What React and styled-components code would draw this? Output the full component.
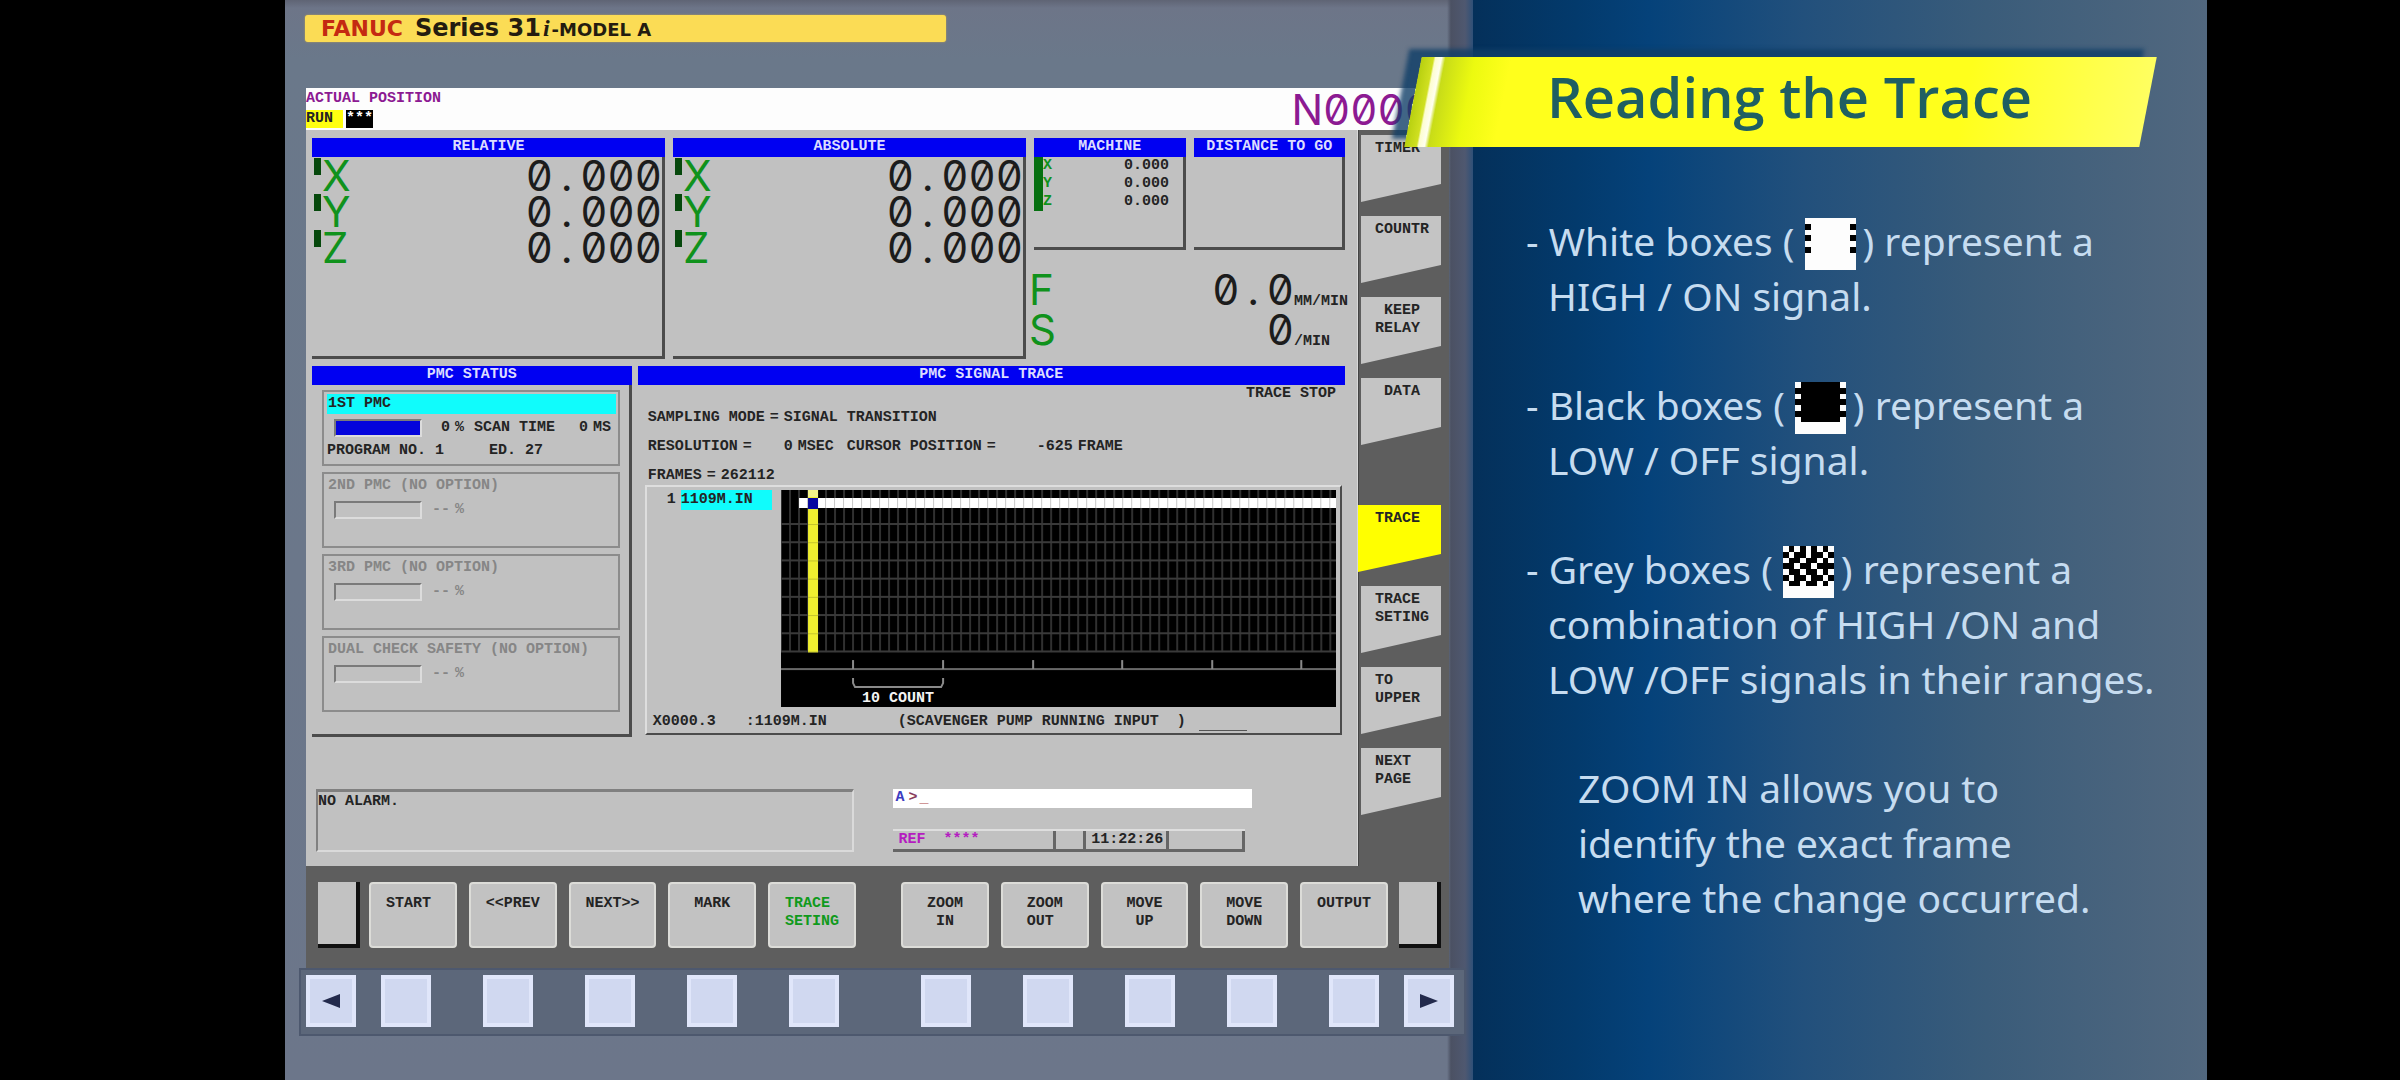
import { Fragment } from "react"
import styled, { createGlobalStyle } from 'styled-components'

const positions = ['X', 'Y', 'Z']

const pmcList = [
    { title: '1ST PMC', active: true, load: ' 0' },
    { title: '2ND PMC (NO OPTION)', load: '--' },
    { title: '3RD PMC (NO OPTION)', load: '--' },
    { title: 'DUAL CHECK SAFETY (NO OPTION)', load: '--' }
]

const sideTabs = [
    { label: 'TIMER' },
    { label: 'COUNTR' },
    { label: ' KEEP\nRELAY' },
    { label: ' DATA' },
    { label: 'TRACE', active: true },
    { label: 'TRACE\nSETING' },
    { label: 'TO\nUPPER' },
    { label: 'NEXT\nPAGE' }
]

const leftKeys = ['START', '<<PREV', 'NEXT>>', ' MARK', 'TRACE\nSETING']
const rightKeys = [' ZOOM\n  IN', ' ZOOM\n OUT', ' MOVE\n  UP', ' MOVE\n DOWN', 'OUTPUT']

// one string per row, # is a white cell
const patterns = {
    white: [
        '#########',
        ' ####### ',
        '#########',
        ' ####### ',
        '#########',
        ' ####### ',
        '#########',
        '#########',
        '#########'
    ],
    black: [
        '#       #',
        '         ',
        '#       #',
        '         ',
        '#       #',
        '         ',
        '#       #',
        '#########',
        '#########'
    ],
    grey: [
        '# # # # #',
        ' #  #  # ',
        '#  #  # #',
        '  #  #   ',
        '#  #  # #',
        ' #  #  # ',
        '#  #  # #',
        '#########',
        '#########'
    ]
}

const SignalBox = ({ kind }) => (
    <BoxIcon viewBox="0 0 9 9" preserveAspectRatio="none" shapeRendering="crispEdges" role="img" aria-label={kind + ' box'}>
        <rect width="9" height="9" fill="#000" />
        {patterns[kind].map((row, y) => row.split('').map((cell, x) => (
            cell === '#' && <rect key={x + '-' + y} x={x} y={y} width="1" height="1" fill="#fdfdfd" />
        )))}
    </BoxIcon>
)

const AxisPanel = ({ title }) => (
    <Panel>
        <PanelTitle>{title}</PanelTitle>
        {positions.map((axis) => (
            <AxisRow key={axis}>
                <Marker />
                <Big $color="#10921c">{axis}</Big>
                <AxisValue>0<Point>.</Point>000</AxisValue>
            </AxisRow>
        ))}
    </Panel>
)

const PmcStatus = () => (
    <StatusPanel>
        <PanelTitle>PMC STATUS</PanelTitle>
        <PmcStack>
            {pmcList.map((pmc) => (
                <PmcBox key={pmc.title} $off={!pmc.active}>
                    <PmcName $active={pmc.active}>{pmc.title}</PmcName>
                    <PmcLine>
                        <Meter $on={pmc.active} />
                        <PmcLoad><span>{pmc.load}</span><span>%</span></PmcLoad>
                        {pmc.active && (
                            <Fragment>
                                <span>SCAN TIME</span>
                                <ScanValue><span>0</span><span>MS</span></ScanValue>
                            </Fragment>
                        )}
                    </PmcLine>
                    {pmc.active && <Line>PROGRAM NO. 1     ED. 27</Line>}
                </PmcBox>
            ))}
        </PmcStack>
    </StatusPanel>
)

const TraceChart = () => {
    const columns = Array.from({ length: 62 }, (_, i) => i * 9)
    const rows = Array.from({ length: 8 }, (_, i) => 34 + i * 18.2)
    const ticks = [72, 162, 252, 341, 431, 520]

    return (
        <Chart viewBox="0 0 555 217" role="img" aria-label="Signal trace">
            <rect width="555" height="217" fill="#000" />
            {columns.map((x) => <rect key={x} x={x - 1} y="0" width="2" height="162" fill="#303030" />)}
            {rows.map((y) => <rect key={y} x="0" y={y - 1} width="555" height="2" fill="#3a3a3a" />)}
            <rect x="18" y="8" width="537" height="10" fill="#fff" />
            {columns.slice(3).map((x) => <rect key={x} x={x - 1} y="8" width="1" height="10" fill="#c8c8c8" />)}
            <rect x="27" y="-1" width="10" height="163" fill="#eeee30" />
            <rect x="27" y="0" width="10" height="7" fill="#f2f28a" />
            {rows.map((y) => <rect key={y} x="27" y={y} width="10" height="1" fill="#c4c42c" />)}
            <rect x="27" y="8" width="10" height="11" fill="#0808a0" />
            <rect x="0" y="178" width="555" height="2" fill="#686868" />
            {ticks.map((x) => <rect key={x} x={x - 1} y="170" width="2" height="9" fill="#8a8a8a" />)}
            <path d="M72 188v5l2 4h86l2-4v-5" fill="none" stroke="#8a8a8a" strokeWidth="2" />
            <text x="81" y="212" fill="#f4f4f4" fontSize="15" fontWeight="700" fontFamily='"Liberation Mono", monospace'>10 COUNT</text>
        </Chart>
    )
}

const SignalTrace = () => (
    <div>
        <PanelTitle>PMC SIGNAL TRACE</PanelTitle>
        <TraceState>TRACE STOP</TraceState>
        <Info>
            <InfoLine><span>SAMPLING MODE</span><span>=</span><span>SIGNAL TRANSITION</span></InfoLine>
            <InfoLine>
                <span>RESOLUTION</span><span>=</span><span>{'   0'}</span><span>MSEC</span>
                <span>CURSOR POSITION</span><span>=</span><span>{'    -625'}</span><span>FRAME</span>
            </InfoLine>
            <InfoLine><span>FRAMES</span><span>=</span><span>262112</span></InfoLine>
        </Info>
        <TraceBox>
            <TraceBody>
                <Signals>
                    <span>1</span>
                    <SignalName>1109M.IN</SignalName>
                </Signals>
                <TraceChart />
            </TraceBody>
            <TraceFoot>
                <Address>X0000.3</Address>
                <SymbolName>:1109M.IN</SymbolName>
                <span>{'(SCAVENGER PUMP RUNNING INPUT  )'}</span>
                <Rule />
            </TraceFoot>
        </TraceBox>
    </div>
)

const Screen = () => (
    <ScreenFrame>
        <ScreenHead>
            <div>
                <Purple>ACTUAL POSITION</Purple>
                <RunLine><Run>RUN</Run><Stars>***</Stars></RunLine>
            </div>
            <Big $color="#8c1a92">N0000</Big>
        </ScreenHead>
        <ScreenBody>
            <Main>
                <PositionGrid>
                    <AxisPanel title="RELATIVE" />
                    <AxisPanel title="ABSOLUTE" />
                    <Rates>
                        <SmallPanels>
                            <Panel>
                                <PanelTitle>MACHINE</PanelTitle>
                                <MachineList>
                                    {positions.map((axis) => (
                                        <MachineRow key={axis}><b>{axis}</b><span>0.000</span></MachineRow>
                                    ))}
                                </MachineList>
                            </Panel>
                            <Panel>
                                <PanelTitle>DISTANCE TO GO</PanelTitle>
                            </Panel>
                        </SmallPanels>
                        <RateRow>
                            <Big $color="#10921c">F</Big>
                            <Big>0<Point>.</Point>0</Big>
                            <Unit>MM/MIN</Unit>
                        </RateRow>
                        <RateRow>
                            <Big $color="#10921c">S</Big>
                            <Big>0</Big>
                            <Unit>/MIN</Unit>
                        </RateRow>
                    </Rates>
                </PositionGrid>
                <PmcGrid>
                    <PmcStatus />
                    <SignalTrace />
                </PmcGrid>
                <Footer>
                    <Alarm>NO ALARM.</Alarm>
                    <div>
                        <Command>
                            <Prompt $color="#3c3cc0">A</Prompt>
                            <Prompt $color="#8a3c5c">&gt;</Prompt>
                            <CommandInput aria-label="Command" defaultValue="_" />
                        </Command>
                        <StateBar>
                            <StateCell><Mode>REF  ****</Mode></StateCell>
                            <StateCell />
                            <StateCell>11:22:26</StateCell>
                            <StateCell />
                        </StateBar>
                    </div>
                </Footer>
            </Main>
            <Tabs>
                {sideTabs.map((tab) => (
                    <Tab key={tab.label} $active={tab.active}>{tab.label}</Tab>
                ))}
            </Tabs>
        </ScreenBody>
        <SoftKeys>
            <EdgeKey aria-label="Previous menu" />
            <KeyGroup>
                {leftKeys.map((label) => (
                    <SoftKey key={label} $green={label.startsWith('TRACE')}><span>{label}</span></SoftKey>
                ))}
            </KeyGroup>
            <KeySpace />
            <KeyGroup>
                {rightKeys.map((label) => <SoftKey key={label}><span>{label}</span></SoftKey>)}
            </KeyGroup>
            <EdgeKey aria-label="Next menu" />
        </SoftKeys>
    </ScreenFrame>
)

const HardwareKeys = () => (
    <KeyPad>
        <HardKey aria-label="Left">
            <svg width="18" height="14" viewBox="0 0 18 14"><path d="M0 7L18 0v14z" fill="#232a4c" /></svg>
        </HardKey>
        <HardGroup>
            {leftKeys.map((label) => <HardKey key={label} aria-label={label.trim()} />)}
        </HardGroup>
        <KeyPadSpace />
        <HardGroup>
            {rightKeys.map((label) => <HardKey key={label} aria-label={label.trim()} />)}
        </HardGroup>
        <HardKey aria-label="Right">
            <svg width="18" height="14" viewBox="0 0 18 14"><path d="M18 7L0 0v14z" fill="#232a4c" /></svg>
        </HardKey>
    </KeyPad>
)

const App = () => {
    return (
        <Page>
            <Global />
            <Machine>
                <Brand>
                    <Fanuc>FANUC</Fanuc>
                    <Series>Series 31</Series>
                    <Italic>i</Italic>
                    <Model>-MODEL A</Model>
                </Brand>
                <Screen />
                <HardwareKeys />
            </Machine>
            <Lesson>
                <Banner><Title>Reading the Trace</Title></Banner>
                <Notes>
                    <Note>- White boxes (<SignalBox kind="white" />) represent a<br />HIGH / ON signal.</Note>
                    <Note>- Black boxes (<SignalBox kind="black" />) represent a<br />LOW / OFF signal.</Note>
                    <Note>- Grey boxes (<SignalBox kind="grey" />) represent a<br />combination of HIGH /ON and<br />LOW /OFF signals in their ranges.</Note>
                    <Tip>ZOOM IN allows you to<br />identify the exact frame<br />where the change occurred.</Tip>
                </Notes>
            </Lesson>
        </Page>
    )
}

const Global = createGlobalStyle`
    * {
        box-sizing: border-box;
    }

    body {
        margin: 0;
        background: #000;
    }

    button, input {
        font: inherit;
        color: inherit;
        border: 0;
        padding: 0;
        margin: 0;
    }
`

const Page = styled.div`
    display: grid;
    grid-template-columns: minmax(0, 1188fr) minmax(0, 734fr);
    min-height: 100vh;
    padding: 0 193px 0 285px;
    overflow: hidden;
`

const Machine = styled.div`
    padding: 15px 9px 0 14px;
    background: linear-gradient(90deg, transparent calc(100% - 26px), #4b5163 calc(100% - 22px), #4f5870 calc(100% - 8px), #2f5078), linear-gradient(#5f6474, #6d7588 8px, #6a788a 60px, #6c768a);
    font: bold 15px/18px "Liberation Mono", monospace;
    color: #242424;
`

const Brand = styled.div`
    display: flex;
    align-items: baseline;
    width: 55%;
    height: 27px;
    margin-left: 6px;
    padding-left: 16px;
    border-radius: 3px;
    background: #fbdc55;
    box-shadow: 0 0 2px #c9a94a;
    color: #241c10;
    font: bold 24px/27px "DejaVu Sans", sans-serif;
`

const Fanuc = styled.span`
    margin-right: 12px;
    font-size: 22px;
    color: #c42a12;
`

const Series = styled.span``

const Italic = styled.i`
    margin: 0 2px;
    font: italic bold 24px/27px "Liberation Serif", serif;
`

const Model = styled.span`
    font-size: 18px;
`

const ScreenFrame = styled.div`
    margin: 46px 15px 0 7px;
    background: #5e5e5e;
`

const ScreenHead = styled.div`
    display: flex;
    justify-content: space-between;
    height: 42px;
    padding: 2px 17px 0 0;
    background: #fdfdfd;
`

const Line = styled.div`
    white-space: pre;
`

const Purple = styled(Line)`
    color: #8c1a92;
`

const RunLine = styled.div`
    display: flex;
    gap: 3px;
    margin-top: 2px;
`

const Run = styled.span`
    width: 37px;
    background: #ffff10;
`

const Stars = styled.span`
    background: #000;
    color: #fff;
`

const Big = styled.span`
    font: 400 42px/40px Inter, sans-serif;
    font-feature-settings: "zero", "tnum";
    color: ${props => props.$color || '#1c1c1c'};
`

const Point = styled.span`
    padding: 0 8px;
`

const ScreenBody = styled.div`
    display: grid;
    grid-template-columns: 1fr 91px;
`

const Main = styled.div`
    padding: 8px 12px 14px 6px;
    background: #c1c1c1;
    border-right: 1px solid #d8d8d8;
`

const PositionGrid = styled.div`
    display: grid;
    grid-template-columns: 353fr 353fr 311fr;
    gap: 8px;
`

const PanelTitle = styled.h2`
    margin: 0;
    height: 19px;
    font: inherit;
    text-align: center;
    white-space: nowrap;
    background: #0000f2;
    color: #dcdcff;
`

const Panel = styled.section`
    border-right: 3px solid #4c4c4c;
    border-bottom: 3px solid #4c4c4c;

    ${PanelTitle} {
        margin-right: -3px;
    }
`

const AxisRow = styled.div`
    display: flex;
    align-items: flex-start;
    height: 36px;
    padding: 1px 0 0 2px;

    ${Big} {
        line-height: 36px;
    }
`

const AxisValue = styled(Big)`
    flex: 1;
    text-align: right;
`

const Marker = styled.i`
    width: 7px;
    height: 17px;
    margin-right: 1px;
    background: #06480c;
`

const Rates = styled.div`
    display: flex;
    flex-direction: column;
    height: 221px;
`

const SmallPanels = styled.div`
    display: grid;
    grid-template-columns: 1fr 1fr;
    gap: 8px;
    height: 112px;
    margin-bottom: 20px;
`

const MachineList = styled.div`
    width: fit-content;
    min-width: 135px;
    border-left: 9px solid #067010;
`

const MachineRow = styled.div`
    display: flex;
    justify-content: space-between;

    b {
        color: #10921c;
    }
`

const RateRow = styled.div`
    display: flex;
    align-items: baseline;
    height: 40px;
    margin: 0 -3px 0 -5px;

    ${Big}:nth-child(2) {
        margin-left: auto;
    }
`

const Unit = styled.span`
    width: 54px;
`

const PmcGrid = styled.div`
    display: grid;
    grid-template-columns: 320fr 708fr;
    gap: 6px;
    margin-top: 7px;
`

const StatusPanel = styled(Panel)`
    height: 371px;
`

const PmcStack = styled.div`
    display: flex;
    flex-direction: column;
    gap: 6px;
    padding: 5px 9px 0 10px;
`

const PmcBox = styled.div`
    height: 76px;
    padding: 2px 2px 0 3px;
    border: 2px solid #8c8c8c;
    color: ${props => props.$off ? '#868686' : '#242424'};
`

const PmcName = styled.div`
    height: 20px;
    padding: 1px;
    background: ${props => props.$active ? '#10fcfc' : 'transparent'};
    white-space: nowrap;
`

const PmcLine = styled.div`
    display: flex;
    gap: 10px;
    margin: 5px 0;
    padding-left: 7px;
`

const PmcLoad = styled.span`
    display: flex;
    gap: 5px;
    white-space: pre;
`

const ScanValue = styled.span`
    display: flex;
    gap: 5px;
    margin-left: 14px;
`

const Meter = styled.span`
    width: 88px;
    height: 18px;
    border: 2px solid;
    border-color: #7a7a7a #dcdcdc #dcdcdc #7a7a7a;
    background: ${props => props.$on ? '#0404dc' : 'transparent'};
`

const TraceState = styled.div`
    padding-right: 9px;
    text-align: right;
`

const Info = styled.div`
    display: flex;
    flex-direction: column;
    gap: 11px;
    padding: 6px 0 0 10px;
`

const InfoLine = styled.div`
    display: flex;
    gap: 5px;
    white-space: pre;

    span:nth-child(5) {
        margin-left: 8px;
    }
`

const TraceBox = styled.div`
    margin: 0 3px 0 7px;
    border: 2px solid;
    border-color: #dedede #4c4c4c #4c4c4c #dedede;
`

const TraceBody = styled.div`
    display: flex;
    align-items: flex-start;
    padding: 3px 4px 0 0;
`

const Signals = styled.div`
    display: flex;
    width: 134px;
    padding-left: 20px;
    gap: 5px;
    line-height: 20px;
`

const SignalName = styled.span`
    width: 91px;
    background: #10fcfc;
`

const Chart = styled.svg`
    flex: 1;
    min-width: 0;
`

const TraceFoot = styled.div`
    display: flex;
    margin-top: 6px;
    padding: 0 0 2px 6px;
    white-space: pre;
`

const Address = styled.span`
    width: 93px;
`

const SymbolName = styled.span`
    width: 152px;
`

const Rule = styled.span`
    width: 48px;
    margin-left: 13px;
    border-bottom: 1px solid #555;
`

const Footer = styled.div`
    display: grid;
    grid-template-columns: 539fr 359fr 54fr;
    column-gap: 39px;
    margin: 52px 0 0 4px;
`

const Alarm = styled.div`
    height: 63px;
    padding-top: 1px;
    border: 2px solid;
    border-top-width: 3px;
    border-color: #808080 #dadada #dadada #808080;
`

const Command = styled.div`
    display: flex;
    height: 19px;
    background: #fff;
`

const Prompt = styled.span`
    padding: 0 2px;
    color: ${props => props.$color};
`

const CommandInput = styled.input`
    flex: 1;
    min-width: 0;
    background: transparent;
    color: #b04848;
    outline: 0;
`

const StateBar = styled.div`
    display: grid;
    grid-template-columns: 162fr 30fr 82fr 76fr;
    width: 98%;
    margin-top: 21px;
    border-top: 2px solid #dedede;
    border-bottom: 3px solid #666;
`

const StateCell = styled.span`
    height: 18px;
    padding-left: 5px;
    border-right: 3px solid #666;
    white-space: pre;
`

const Mode = styled.span`
    color: #b41cc0;
`

const Tabs = styled.nav`
    display: flex;
    flex-direction: column;
    gap: 14px;
    padding: 5px 8px 0 0;
    border-left: 1px solid #444;
`

const Tab = styled.button`
    height: 67px;
    margin-left: ${props => props.$active ? '-1px' : '2px'};
    margin-top: ${props => props.$active ? '46px' : '0'};
    padding: 5px 0 0 ${props => props.$active ? '17px' : '14px'};
    background: ${props => props.$active ? '#ffff00' : '#c4c4c4'};
    clip-path: polygon(0 0, 100% 0, 100% 73%, 0 100%);
    display: flex;
    align-items: flex-start;
    text-align: left;
    white-space: pre;
`

const EdgeKey = styled.button`
    width: 42px;
    height: 66px;
    background: #c2c2c2;
    border: solid #101010;
    border-width: 0 4px 4px 0;
`

const SoftKeys = styled.div`
    display: flex;
    gap: 9px;
    height: 102px;
    padding: 16px 8px 0 12px;

    ${EdgeKey}:last-child {
        margin-left: 2px;
    }
`

const KeyGroup = styled.div`
    display: flex;
    flex: 1;
    gap: 12px;
`

const KeySpace = styled.span`
    width: 27px;
`

const SoftKey = styled.button`
    display: flex;
    flex: 1;
    justify-content: center;
    height: 66px;
    padding-top: 11px;
    border: 2px solid #dcdcd8;
    border-radius: 4px;
    background: #c2c2c2;
    color: ${props => props.$green ? '#109a1c' : '#242424'};

    span {
        width: 54px;
        text-align: left;
        white-space: pre;
    }
`

const KeyPad = styled.div`
    display: flex;
    gap: 25px;
    height: 68px;
    margin-right: -2px;
    padding: 5px 10px 0 5px;
    border: 2px solid #4d586e;
    background: #5c677a;
`

const KeyPadSpace = styled.span`
    width: 32px;
`

const HardGroup = styled.div`
    display: flex;
    flex: 1;
    justify-content: space-between;
`

const HardKey = styled.button`
    display: grid;
    place-items: center;
    width: 50px;
    height: 52px;
    border: 4px solid #e0e6fa;
    background: #d0d8f0;
`

const Lesson = styled.div`
    position: relative;
    padding: 213px 0 0 53px;
    background: linear-gradient(90deg, #04305a, #033a6c 14%, #05427a 24%, #22507c 45%, #3a5c7a 70%, #52687f);
    font: 39px/55px "Noto Sans", sans-serif;
    color: #c6dcf0;
`

/* skewed strip that laps over the edge of the machine */
const Banner = styled.div`
    position: absolute;
    top: 57px;
    left: -60px;
    right: 59px;
    height: 90px;
    display: flex;
    align-items: center;

    &::before {
        content: '';
        position: absolute;
        inset: 0;
        transform: skewX(-11deg);
        background: linear-gradient(90deg, #b8d010, #d0e020 12px, #fdfdd0 14px, #fffff0 20px, #c8dc18 24px, #ecfa10 54px, #ffff1c 90px, #ffff1c 75%, #ffff60);
        box-shadow: -14px -8px 4px rgba(16, 62, 104, 0.8);
    }
`

const Title = styled.h1`
    position: relative;
    margin: 0 0 12px 134px;
    font: 600 56px/72px "Open Sans", sans-serif;
    white-space: nowrap;
    color: #1f5f62;
`

const Notes = styled.div`
    display: flex;
    flex-direction: column;
    gap: 54px;
`

const Note = styled.p`
    margin: 0;
    padding-left: 22px;
    text-indent: -22px;
    white-space: nowrap;
`

const Tip = styled.p`
    margin: 0;
    padding-left: 52px;
    white-space: nowrap;
`

/* negative margins keep the box from stretching its line */
const BoxIcon = styled.svg`
    width: 51px;
    height: 52px;
    margin: -10px 7px -10px 10px;
    vertical-align: -4px;
`

export default App
